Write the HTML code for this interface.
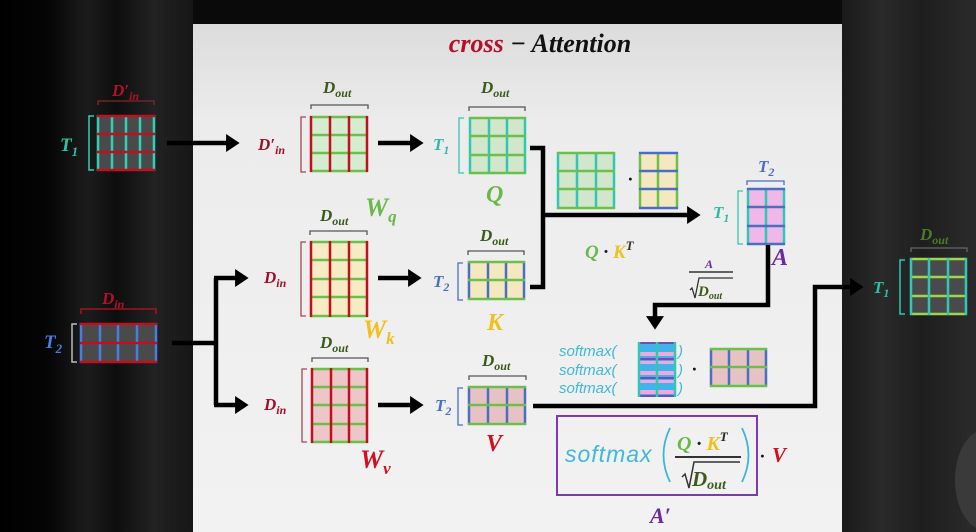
<!DOCTYPE html>
<html><head><meta charset="utf-8"><style>
html,body{margin:0;padding:0;width:976px;height:532px;overflow:hidden;background:#000}
svg{display:block}
text{font-family:"Liberation Serif","DejaVu Serif",serif;font-weight:bold;font-style:italic}
.s{font-family:"Liberation Sans","DejaVu Sans",sans-serif;font-weight:normal;font-style:italic}
</style></head><body>
<svg width="976" height="532" viewBox="0 0 976 532" xmlns="http://www.w3.org/2000/svg">
<defs>
<linearGradient id="bgL" x1="0" x2="1" y1="0" y2="0">
<stop offset="0" stop-color="#000"/><stop offset="0.25" stop-color="#050505"/><stop offset="0.45" stop-color="#1c1c1c"/><stop offset="0.6" stop-color="#0e0e0e"/><stop offset="0.8" stop-color="#222"/><stop offset="1" stop-color="#161616"/>
</linearGradient>
<linearGradient id="bgR" x1="0" x2="1" y1="0" y2="0">
<stop offset="0" stop-color="#1a1a1a"/><stop offset="0.3" stop-color="#2a2a2a"/><stop offset="0.6" stop-color="#1e1e1e"/><stop offset="1" stop-color="#2b2b2b"/>
</linearGradient>
<linearGradient id="pan" x1="0" x2="0" y1="0" y2="1">
<stop offset="0" stop-color="#dcdcdc"/><stop offset="0.2" stop-color="#ececec"/><stop offset="1" stop-color="#f2f2f2"/>
</linearGradient>
<marker id="ah" markerWidth="4" markerHeight="4" refX="2.2" refY="2" orient="auto" markerUnits="strokeWidth"><path d="M0,0 L3,2 L0,4 z" fill="#000"/></marker>
</defs>
<rect x="0" y="0" width="193" height="532" fill="url(#bgL)"/>
<rect x="842" y="0" width="134" height="532" fill="url(#bgR)"/>
<rect x="193" y="0" width="649" height="24" fill="#0a0a0a"/>
<rect x="193" y="24" width="649" height="508" fill="url(#pan)"/>
<ellipse cx="985" cy="480" rx="30" ry="50" fill="#3a3a3a"/>

<text x="540" y="52" font-size="26" text-anchor="middle"><tspan fill="#b4102a">cross</tspan><tspan fill="#111"> − Attention</tspan></text>

<g fill="none" stroke-linecap="butt">
<rect x="97" y="115" width="58" height="56" fill="#4a4a4a"/>
<g stroke="#2fd0b5" stroke-width="2.5"><path d="M98 115v56M112 115v56M126 115v56M140 115v56M154 115v56"/></g>
<g stroke="#c0101e" stroke-width="2.5"><path d="M97 116h58M97 134h58M97 152h58M97 170h58"/></g>
<path d="M94 116h-5v54h5" stroke="#2fd0b5" stroke-width="1.5"/>
<path d="M98 105v-4h56v4" stroke="#7a2a2a" stroke-width="1.3"/>

<rect x="80" y="323" width="77" height="40" fill="#4a4a4a"/>
<g stroke="#4a7de0" stroke-width="2.5"><path d="M81 323v40M100 323v40M118 323v40M137 323v40M156 323v40"/></g>
<g stroke="#c0101e" stroke-width="2.5"><path d="M80 324h77M80 343h77M80 362h77"/></g>
<path d="M77 324h-5v38h5" stroke="#bbb" stroke-width="1.5"/>
<path d="M81 314v-5h75v5" stroke="#c0101e" stroke-width="1.3"/>

<rect x="310" y="116" width="58" height="56" fill="#d6ecd0"/>
<g stroke="#6cc04a" stroke-width="2.5"><path d="M310 117h58M310 135h58M310 153h58M310 171h58"/></g>
<g stroke="#c0101e" stroke-width="2.5"><path d="M311 116v56M330 116v56M349 116v56M367 116v56"/></g>
<path d="M306 117h-5v55h5" stroke="#9a4a5a" stroke-width="1.3"/>
<path d="M311 109v-4h57v4" stroke="#555" stroke-width="1.3"/>

<rect x="310" y="241" width="58" height="76" fill="#f6ebc4"/>
<g stroke="#6cc04a" stroke-width="2.5"><path d="M310 242h58M310 260h58M310 279h58M310 297h58M310 316h58"/></g>
<g stroke="#c0101e" stroke-width="2.5"><path d="M311 241v76M330 241v76M349 241v76M367 241v76"/></g>
<path d="M306 242h-5v74h5" stroke="#9a4a5a" stroke-width="1.3"/>
<path d="M310 235v-4h57v4" stroke="#555" stroke-width="1.3"/>

<rect x="311" y="368" width="57" height="75" fill="#edc6c8"/>
<g stroke="#6cc04a" stroke-width="2.5"><path d="M311 369h57M311 387h57M311 405h57M311 424h57M311 442h57"/></g>
<g stroke="#c0101e" stroke-width="2.5"><path d="M312 368v75M331 368v75M349 368v75M367 368v75"/></g>
<path d="M307 369h-5v73h5" stroke="#9a4a5a" stroke-width="1.3"/>
<path d="M312 362v-4h56v4" stroke="#555" stroke-width="1.3"/>

<rect x="469" y="117" width="57" height="57" fill="#d2e6cc"/>
<g stroke="#30c8b4" stroke-width="2.5"><path d="M470 117v57M489 117v57M507 117v57M525 117v57"/></g>
<g stroke="#6cc04a" stroke-width="2.5"><path d="M469 118h57M469 136h57M469 155h57M469 173h57"/></g>
<path d="M464 118h-5v55h5" stroke="#30c8b4" stroke-width="1.3"/>
<path d="M469 111v-4h56v4" stroke="#555" stroke-width="1.3"/>

<rect x="468" y="261" width="57" height="39" fill="#f4e8c0"/>
<g stroke="#4a6fc0" stroke-width="2.5"><path d="M469 261v39M488 261v39M506 261v39M524 261v39"/></g>
<g stroke="#6cc04a" stroke-width="2.5"><path d="M468 262h57M468 280h57M468 299h57"/></g>
<path d="M463 263h-5v37h5" stroke="#4a6fc0" stroke-width="1.3"/>
<path d="M468 255v-4h56v4" stroke="#555" stroke-width="1.3"/>

<rect x="468" y="386" width="58" height="39" fill="#e6c2c4"/>
<g stroke="#4a6fc0" stroke-width="2.5"><path d="M469 386v39M488 386v39M507 386v39M525 386v39"/></g>
<g stroke="#6cc04a" stroke-width="2.5"><path d="M468 387h58M468 405h58M468 424h58"/></g>
<path d="M463 388h-5v37h5" stroke="#4a6fc0" stroke-width="1.3"/>
<path d="M469 380v-4h57v4" stroke="#555" stroke-width="1.3"/>

<rect x="557" y="152" width="58" height="57" fill="#d2e6cc"/>
<g stroke="#30c8b4" stroke-width="2.5"><path d="M558 152v57M577 152v57M596 152v57M614 152v57"/></g>
<g stroke="#6cc04a" stroke-width="2.5"><path d="M557 153h58M557 171h58M557 189h58M557 208h58"/></g>
<rect x="639" y="152" width="39" height="57" fill="#f4e8c0"/>
<g stroke="#6cc04a" stroke-width="2.5"><path d="M640 152v57M658 152v57M677 152v57"/></g>
<g stroke="#4a6fc0" stroke-width="2.5"><path d="M639 153h39M639 171h39M639 189h39M639 208h39"/></g>

<rect x="747" y="188" width="38" height="57" fill="#f0b8e8"/>
<g stroke="#30c8b4" stroke-width="2.5"><path d="M748 188v57M766 188v57M784 188v57"/></g>
<g stroke="#4a6fc0" stroke-width="2.5"><path d="M747 189h38M747 207h38M747 226h38M747 244h38"/></g>
<path d="M743 191h-5v53h5" stroke="#30c8b4" stroke-width="1.3"/>
<path d="M747 185v-4h37v4" stroke="#4a6fc0" stroke-width="1.3"/>

<rect x="638" y="342" width="38" height="55" fill="#40b4e8"/>
<g fill="#f0a8e0"><rect x="638" y="352" width="38" height="4"/><rect x="638" y="361" width="38" height="3"/><rect x="638" y="371" width="38" height="4"/><rect x="638" y="380" width="38" height="3"/><rect x="638" y="390" width="38" height="4"/></g>
<g stroke="#7a4ab0" stroke-width="2"><path d="M638 343h38M638 359h38M638 378h38M638 396h38"/></g>
<g stroke="#30c8b4" stroke-width="2.5"><path d="M639 342v55M657 342v55M675 342v55"/></g>
<rect x="710" y="348" width="57" height="39" fill="#e6c2c4"/>
<g stroke="#4a6fc0" stroke-width="2.5"><path d="M711 348v39M729 348v39M748 348v39M766 348v39"/></g>
<g stroke="#6cc04a" stroke-width="2.5"><path d="M710 349h57M710 367h57M710 386h57"/></g>

<rect x="910" y="258" width="57" height="57" fill="#4a4a4c"/>
<g stroke="#9ad84a" stroke-width="2.5"><path d="M910 259h57M910 277h57M910 296h57M910 314h57"/></g>
<g stroke="#30c8b4" stroke-width="2.5"><path d="M911 258v57M929 258v57M948 258v57M966 258v57"/></g>
<path d="M905 260h-5v54h5" stroke="#30c8b4" stroke-width="1.5"/>
<path d="M911 252v-4h56v4" stroke="#666" stroke-width="1.3"/>

<g stroke="#000" stroke-width="4.5">
<path d="M167 143H236" marker-end="url(#ah)"/>
<path d="M378 143H420" marker-end="url(#ah)"/>
<path d="M378 278H418" marker-end="url(#ah)"/>
<path d="M378 405H420" marker-end="url(#ah)"/>
<path d="M172 343H216M216 278V405"/>
<path d="M214 278H245" marker-end="url(#ah)"/>
<path d="M214 405H245" marker-end="url(#ah)"/>
<path d="M530 148H543V287H530"/>
<path d="M543 215H697" marker-end="url(#ah)"/>
<path d="M768 245V305H655V326" marker-end="url(#ah)"/>
<path d="M533 406H815V287H860" marker-end="url(#ah)"/>
</g>
<rect x="557" y="416" width="200" height="79" stroke="#7a3ab0" stroke-width="2"/>
<path d="M670 428q-13 27 0 54M742 428q13 27 0 54" stroke="#3ab8d8" stroke-width="1.8"/>
<path d="M675 457h66" stroke="#333" stroke-width="2"/>
<path d="M682 477l3 -3l4 14l5 -26h46" stroke="#333" stroke-width="1.5"/>
<path d="M689 272h44" stroke="#333" stroke-width="1.5"/>
<path d="M690 290l2 -2l3 10l4 -20h34" stroke="#333" stroke-width="1.3"/>
</g>

<text x="112" y="96" font-size="17" fill="#b4102a">D′<tspan font-size="12" dy="4">in</tspan></text>
<text x="60" y="151" font-size="19" fill="#2fc0a8">T<tspan font-size="13" dy="5">1</tspan></text>
<text x="102" y="304" font-size="17" fill="#b4102a">D<tspan font-size="12" dy="4">in</tspan></text>
<text x="44" y="348" font-size="19" fill="#4a7de0">T<tspan font-size="13" dy="5">2</tspan></text>

<text x="258" y="150" font-size="17" fill="#a0102a">D′<tspan font-size="12" dy="4">in</tspan></text>
<text x="264" y="283" font-size="17" fill="#a0102a">D<tspan font-size="12" dy="4">in</tspan></text>
<text x="264" y="410" font-size="17" fill="#a0102a">D<tspan font-size="12" dy="4">in</tspan></text>

<text x="323" y="93" font-size="17" fill="#3a5a1a">D<tspan font-size="12" dy="4">out</tspan></text>
<text x="320" y="221" font-size="17" fill="#3a5a1a">D<tspan font-size="12" dy="4">out</tspan></text>
<text x="320" y="348" font-size="17" fill="#3a5a1a">D<tspan font-size="12" dy="4">out</tspan></text>
<text x="481" y="93" font-size="17" fill="#3a5a1a">D<tspan font-size="12" dy="4">out</tspan></text>
<text x="480" y="241" font-size="17" fill="#3a5a1a">D<tspan font-size="12" dy="4">out</tspan></text>
<text x="482" y="366" font-size="17" fill="#3a5a1a">D<tspan font-size="12" dy="4">out</tspan></text>
<text x="920" y="240" font-size="17" fill="#4a7a2a">D<tspan font-size="12" dy="4">out</tspan></text>

<text x="365" y="216" font-size="26" fill="#6ab84a">W<tspan font-size="17" dy="6">q</tspan></text>
<text x="363" y="338" font-size="26" fill="#f0c020">W<tspan font-size="17" dy="6">k</tspan></text>
<text x="360" y="468" font-size="26" fill="#d0101e">W<tspan font-size="17" dy="6">v</tspan></text>

<text x="433" y="150" font-size="17" fill="#30b8a8">T<tspan font-size="12" dy="4">1</tspan></text>
<text x="433" y="287" font-size="17" fill="#4a6fc0">T<tspan font-size="12" dy="4">2</tspan></text>
<text x="435" y="411" font-size="17" fill="#4a6fc0">T<tspan font-size="12" dy="4">2</tspan></text>
<text x="713" y="218" font-size="17" fill="#30b8a8">T<tspan font-size="12" dy="4">1</tspan></text>
<text x="758" y="172" font-size="17" fill="#4a6fc0">T<tspan font-size="12" dy="4">2</tspan></text>
<text x="873" y="293" font-size="17" fill="#2fc0a8">T<tspan font-size="12" dy="4">1</tspan></text>

<text x="486" y="202" font-size="24" fill="#6ab84a">Q</text>
<text x="487" y="330" font-size="24" fill="#f0c020">K</text>
<text x="486" y="451" font-size="24" fill="#d0101e">V</text>
<text x="772" y="265" font-size="24" fill="#6a2aa0">A</text>
<text x="650" y="523" font-size="22" fill="#6a2aa0">A′</text>

<text x="585" y="258" font-size="19" fill="#6ab84a">Q <tspan fill="#222">·</tspan> <tspan fill="#f0c020">K</tspan><tspan fill="#333" font-size="13" dy="-8">T</tspan></text>
<text x="628" y="185" font-size="18" fill="#111">·</text>
<text x="705" y="268" font-size="12" fill="#6a2aa0">A</text>
<text x="698" y="296" font-size="15" fill="#3a5a1a">D<tspan font-size="10" dy="3">out</tspan></text>

<text class="s" x="559" y="356" font-size="15" fill="#40b8d8">softmax(</text>
<text class="s" x="559" y="375" font-size="15" fill="#40b8d8">softmax(</text>
<text class="s" x="559" y="393" font-size="15" fill="#40b8d8">softmax(</text>
<text class="s" x="678" y="356" font-size="15" fill="#40b8d8">)</text>
<text class="s" x="678" y="375" font-size="15" fill="#40b8d8">)</text>
<text class="s" x="678" y="393" font-size="15" fill="#40b8d8">)</text>
<text x="692" y="375" font-size="18" fill="#111">·</text>

<text class="s" x="565" y="462" font-size="23" letter-spacing="1" fill="#40b8d8">softmax</text>
<text x="677" y="450" font-size="20" fill="#6ab84a">Q <tspan fill="#222">·</tspan> <tspan fill="#f0c020">K</tspan><tspan fill="#222" font-size="13" dy="-9">T</tspan></text>
<text x="692" y="486" font-size="21" fill="#3a5a1a">D<tspan font-size="14" dy="3">out</tspan></text>
<text x="760" y="462" font-size="18" fill="#111">·</text>
<text x="772" y="462" font-size="21" fill="#d0101e">V</text>
</svg>
</body></html>
